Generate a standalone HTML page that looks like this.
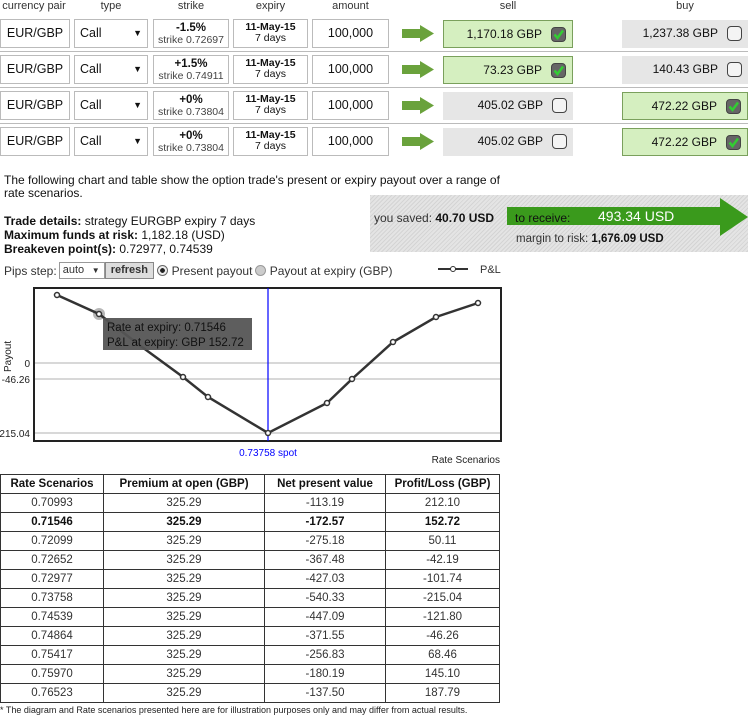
<!DOCTYPE html><html><head><meta charset="utf-8"><style>
body{margin:0;width:748px;height:716px;position:relative;font-family:"Liberation Sans",Arial,sans-serif;background:#fff;color:#111;overflow:hidden}
.a{position:absolute}
.hd{font-size:11px;color:#333;text-align:center;top:0}
.box{position:absolute;border:1px solid #bbb;box-sizing:border-box;background:#fff;text-align:center;font-size:12px}
.sep{position:absolute;left:0;width:748px;height:1px;background:#bbb}
.pr{position:absolute;box-sizing:border-box;font-size:12px;text-align:right;padding-right:30px;line-height:27px;height:28px}
.g{background:#d5efc0;border:1px solid #7aa05c}
.n{background:#e6e6e6}
.cb{position:absolute;right:6px;top:6px;width:13px;height:13px;border:1px solid #444;border-radius:4px;background:#f4f4f4}
.cb.on{background:#666;}
table{border-collapse:collapse;font-size:11.5px;color:#333}
td,th{border:1px solid #333;text-align:center;height:18px;padding:0}
th{color:#111}
</style></head><body>
<div class="a hd" style="left:0;width:68px">currency pair</div>
<div class="a hd" style="left:74px;width:74px">type</div>
<div class="a hd" style="left:153px;width:76px">strike</div>
<div class="a hd" style="left:233px;width:75px">expiry</div>
<div class="a hd" style="left:312px;width:77px">amount</div>
<div class="a hd" style="left:443px;width:130px">sell</div>
<div class="a hd" style="left:622px;width:126px">buy</div>

<div id="rows"></div>
<script>
var d=[["-1.5%","0.72697","1,170.18 GBP",1,"1,237.38 GBP",0],["+1.5%","0.74911","73.23 GBP",1,"140.43 GBP",0],["+0%","0.73804","405.02 GBP",0,"472.22 GBP",1],["+0%","0.73804","405.02 GBP",0,"472.22 GBP",1]];
var ck='<svg width="13" height="13" style="display:block"><path d="M2.5 6.5L5.5 10L11 2.5" stroke="#3c3" stroke-width="2.5" fill="none"/></svg>';
var h="";
d.forEach(function(r,i){var y=19+i*36;
h+='<div class="box" style="left:0;top:'+y+'px;width:70px;height:29px;line-height:27px;font-size:12.5px">EUR/GBP</div>';
h+='<div class="box" style="left:74px;top:'+y+'px;width:74px;height:29px;line-height:27px;text-align:left;padding-left:5px;font-size:12.5px">Call<span style="position:absolute;right:5px;font-size:9px">&#9660;</span></div>';
h+='<div class="box" style="left:153px;top:'+y+'px;width:76px;height:29px;line-height:11px;padding-top:2px"><b style="font-size:11.5px">'+r[0]+'</b><br><span style="font-size:10.5px;color:#444">strike '+r[1]+'</span></div>';
h+='<div class="box" style="left:233px;top:'+y+'px;width:75px;height:29px;line-height:11px;padding-top:2px;font-size:10.5px"><b>11-May-15</b><br>7 days</div>';
h+='<div class="box" style="left:312px;top:'+y+'px;width:77px;height:29px;line-height:27px;font-size:12.5px">100,000</div>';
h+='<svg class="a" style="left:402px;top:'+(y+6)+'px" width="32" height="17"><path d="M0 4H18V0L32 8.5L18 17V13H0Z" fill="#6aa23c"/></svg>';
h+='<div class="pr '+(r[3]?'g':'n')+'" style="left:443px;top:'+(y+1)+'px;width:130px">'+r[2]+'<div class="cb'+(r[3]?' on':'')+'">'+(r[3]?ck:'')+'</div></div>';
h+='<div class="pr '+(r[5]?'g':'n')+'" style="left:622px;top:'+(y+1)+'px;width:126px">'+r[4]+'<div class="cb'+(r[5]?' on':'')+'">'+(r[5]?ck:'')+'</div></div>';
if(i<3)h+='<div class="sep" style="top:'+(y+32)+'px"></div>';
});
document.getElementById('rows').innerHTML=h;
</script>

<div class="a" style="left:4px;top:174px;font-size:12px;line-height:13px;width:500px">The following chart and table show the option trade's present or expiry payout over a range of rate scenarios.</div>
<div class="a" style="left:4px;top:214px;font-size:12px;line-height:14px"><b>Trade details:</b> strategy EURGBP expiry 7 days<br><b>Maximum funds at risk:</b> 1,182.18 (USD)<br><b>Breakeven point(s):</b> 0.72977, 0.74539</div>

<div class="a" style="left:370px;top:195px;width:378px;height:57px;background:repeating-linear-gradient(135deg,#d4d4d4 0 1px,#e4e4e4 1px 3px)"></div>
<div class="a" style="left:374px;top:211px;font-size:12px;color:#333">you saved: <b style="color:#111">40.70 USD</b></div>
<svg class="a" style="left:507px;top:198px" width="241" height="38"><path d="M0 9H213V0L241 19L213 38V27H0Z" fill="#3a9a1c"/></svg>
<div class="a" style="left:515px;top:211px;font-size:12px;color:#111">to receive:</div>
<div class="a" style="left:598px;top:208px;font-size:14px;color:#fff">493.34 USD</div>
<div class="a" style="left:516px;top:233px;font-size:11.5px;color:#333">margin to risk: <b style="color:#111">1,676.09 USD</b></div>

<div class="a" style="left:4px;top:262px;font-size:12px;color:#333;display:flex;align-items:center;white-space:nowrap">Pips step:<span style="display:inline-block;position:relative;border:1px solid #999;width:46px;height:17px;font-size:11px;line-height:15px;padding-left:3px;box-sizing:border-box;margin-left:2px;background:#fff">auto<span style="position:absolute;right:4px;font-size:8px">&#9660;</span></span><span style="display:inline-block;border:1px solid #888;background:#ddd;height:17px;line-height:15px;font-size:11px;font-weight:bold;padding:0 5px;box-sizing:border-box">refresh</span>&nbsp;<span style="display:inline-block;width:9px;height:9px;border-radius:50%;border:1px solid #666;background:radial-gradient(#222 35%,#eee 40%)"></span>&nbsp;Present payout <span style="display:inline-block;width:9px;height:9px;border-radius:50%;border:1px solid #999;background:#ccc;margin-left:3px"></span>&nbsp;Payout at expiry (GBP)</div>
<svg class="a" style="left:438px;top:262px" width="70" height="14"><line x1="0" y1="7" x2="30" y2="7" stroke="#333" stroke-width="2"/><circle cx="15" cy="7" r="2.5" fill="#fff" stroke="#333"/><text x="42" y="11" font-size="11" font-family="Liberation Sans" fill="#333">P&amp;L</text></svg>

<svg class="a" style="left:0;top:280px" width="510" height="190" font-family="Liberation Sans">
<rect x="34" y="8" width="467" height="153" fill="#fff" stroke="#222" stroke-width="2"/>
<line x1="35" y1="83" x2="500" y2="83" stroke="#ccc" stroke-width="1.5"/>
<line x1="35" y1="99" x2="500" y2="99" stroke="#ccc" stroke-width="1.5"/>
<line x1="35" y1="153" x2="500" y2="153" stroke="#ccc" stroke-width="1.5"/>
<line x1="268" y1="8" x2="268" y2="161" stroke="#00f" stroke-width="1.2"/>
<circle cx="99" cy="34" r="6" fill="#999" opacity=".7"/>
<polyline points="57,15 99,34 142,67 183,97 208,117 268,153 327,123 352,99 393,62 436,37 478,23" fill="none" stroke="#333" stroke-width="2.5"/>
<g fill="#fff" stroke="#333" stroke-width="1.5"><circle cx="57" cy="15" r="2.5"/><circle cx="99" cy="34" r="2.5"/><circle cx="183" cy="97" r="2.5"/><circle cx="208" cy="117" r="2.5"/><circle cx="268" cy="153" r="2.5"/><circle cx="327" cy="123" r="2.5"/><circle cx="352" cy="99" r="2.5"/><circle cx="393" cy="62" r="2.5"/><circle cx="436" cy="37" r="2.5"/><circle cx="478" cy="23" r="2.5"/></g>
<rect x="103" y="38" width="149" height="32" fill="#555" opacity=".95"/>
<text x="107" y="51" font-size="11.5" fill="#111">Rate at expiry: 0.71546</text>
<text x="107" y="66" font-size="11.5" fill="#111">P&amp;L at expiry: GBP 152.72</text>
<text x="30" y="87" font-size="10" text-anchor="end" fill="#222">0</text>
<text x="30" y="103" font-size="10" text-anchor="end" fill="#222">-46.26</text>
<text x="30" y="157" font-size="10" text-anchor="end" fill="#222">-215.04</text>
<text transform="translate(11,92) rotate(-90)" font-size="10" fill="#222">Payout</text>
<text x="268" y="176" font-size="10" text-anchor="middle" fill="#00f">0.73758 spot</text>
<text x="500" y="183" font-size="10" text-anchor="end" fill="#222">Rate Scenarios</text>
</svg>

<table class="a" style="left:0;top:474px;width:500px">
<tr><th style="width:102px">Rate Scenarios</th><th style="width:160px">Premium at open (GBP)</th><th style="width:120px">Net present value</th><th>Profit/Loss (GBP)</th></tr>
<tr><td>0.70993</td><td>325.29</td><td>-113.19</td><td>212.10</td></tr>
<tr style="font-weight:bold;color:#111"><td>0.71546</td><td>325.29</td><td>-172.57</td><td>152.72</td></tr>
<tr><td>0.72099</td><td>325.29</td><td>-275.18</td><td>50.11</td></tr>
<tr><td>0.72652</td><td>325.29</td><td>-367.48</td><td>-42.19</td></tr>
<tr><td>0.72977</td><td>325.29</td><td>-427.03</td><td>-101.74</td></tr>
<tr><td>0.73758</td><td>325.29</td><td>-540.33</td><td>-215.04</td></tr>
<tr><td>0.74539</td><td>325.29</td><td>-447.09</td><td>-121.80</td></tr>
<tr><td>0.74864</td><td>325.29</td><td>-371.55</td><td>-46.26</td></tr>
<tr><td>0.75417</td><td>325.29</td><td>-256.83</td><td>68.46</td></tr>
<tr><td>0.75970</td><td>325.29</td><td>-180.19</td><td>145.10</td></tr>
<tr><td>0.76523</td><td>325.29</td><td>-137.50</td><td>187.79</td></tr>
</table>
<div class="a" style="left:0;top:705px;font-size:9px;color:#222">* The diagram and Rate scenarios presented here are for illustration purposes only and may differ from actual results.</div>
</body></html>
